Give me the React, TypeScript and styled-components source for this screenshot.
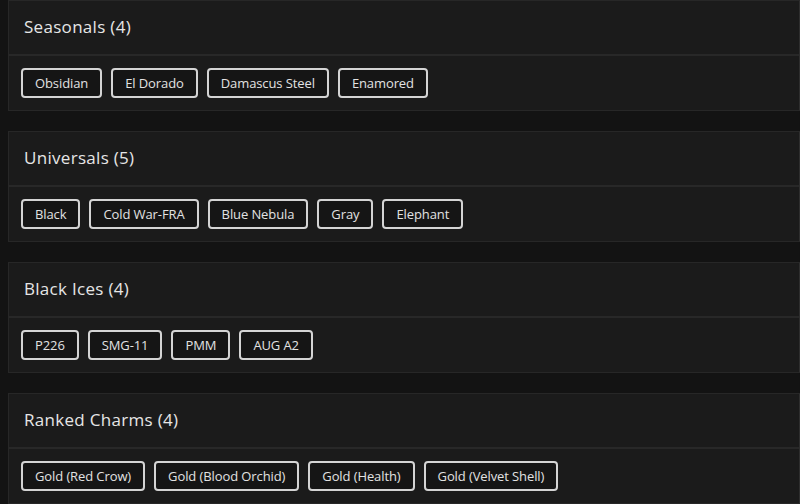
import React from 'react'
import styled, { createGlobalStyle } from 'styled-components'

type Group = {
	title: string
	items: string[]
}

const groups: Group[] = [
	{ title: 'Seasonals', items: ['Obsidian', 'El Dorado', 'Damascus Steel', 'Enamored'] },
	{ title: 'Universals', items: ['Black', 'Cold War-FRA', 'Blue Nebula', 'Gray', 'Elephant'] },
	{ title: 'Black Ices', items: ['P226', 'SMG-11', 'PMM', 'AUG A2'] },
	{ title: 'Ranked Charms', items: ['Gold (Red Crow)', 'Gold (Blood Orchid)', 'Gold (Health)', 'Gold (Velvet Shell)'] },
]

const GlobalStyle = createGlobalStyle`
	html, body {
		margin: 0;
		background: #131313;
		overflow: hidden;
	}
	body {
		padding: 0 0 0 8px;
		font-family: 'Open Sans', 'Noto Sans', sans-serif;
	}
`

export default function App() {
	return (
		<>
			<GlobalStyle />
			<List>
				{groups.map(group => (
					<Card key={group.title}>
						<CardHeader>
							{group.title} ({group.items.length})
						</CardHeader>
						<CardBody>
							{group.items.map(item => (
								<Chip key={item}>{item}</Chip>
							))}
						</CardBody>
					</Card>
				))}
			</List>
		</>
	)
}

const List = styled.div`
	display: flex;
	flex-direction: column;
	gap: 20px;
	width: 792px;
`

const Card = styled.section`
	background: #1b1b1b;
	border: 1px solid #272727;
	border-right-color: #2e2e2e;
`

const CardHeader = styled.div`
	box-sizing: border-box;
	height: 55px;
	display: flex;
	align-items: center;
	padding: 0 15px 3px;
	font-size: 17px;
	font-weight: 500;
	letter-spacing: 0.3px;
	color: #e6e6e6;
	border-bottom: 2px solid #282828;
`

const CardBody = styled.div`
	display: flex;
	flex-wrap: wrap;
	gap: 9px;
	padding: 12px 12px;
`

const Chip = styled.button`
	box-sizing: border-box;
	height: 30px;
	padding: 0 12px;
	background: #151515;
	border: 2px solid #d4d4d4;
	border-radius: 4px;
	color: #e2e2e2;
	font-family: 'Open Sans', 'Noto Sans', sans-serif;
	font-size: 13px;
	letter-spacing: -0.1px;
	cursor: pointer;
`
